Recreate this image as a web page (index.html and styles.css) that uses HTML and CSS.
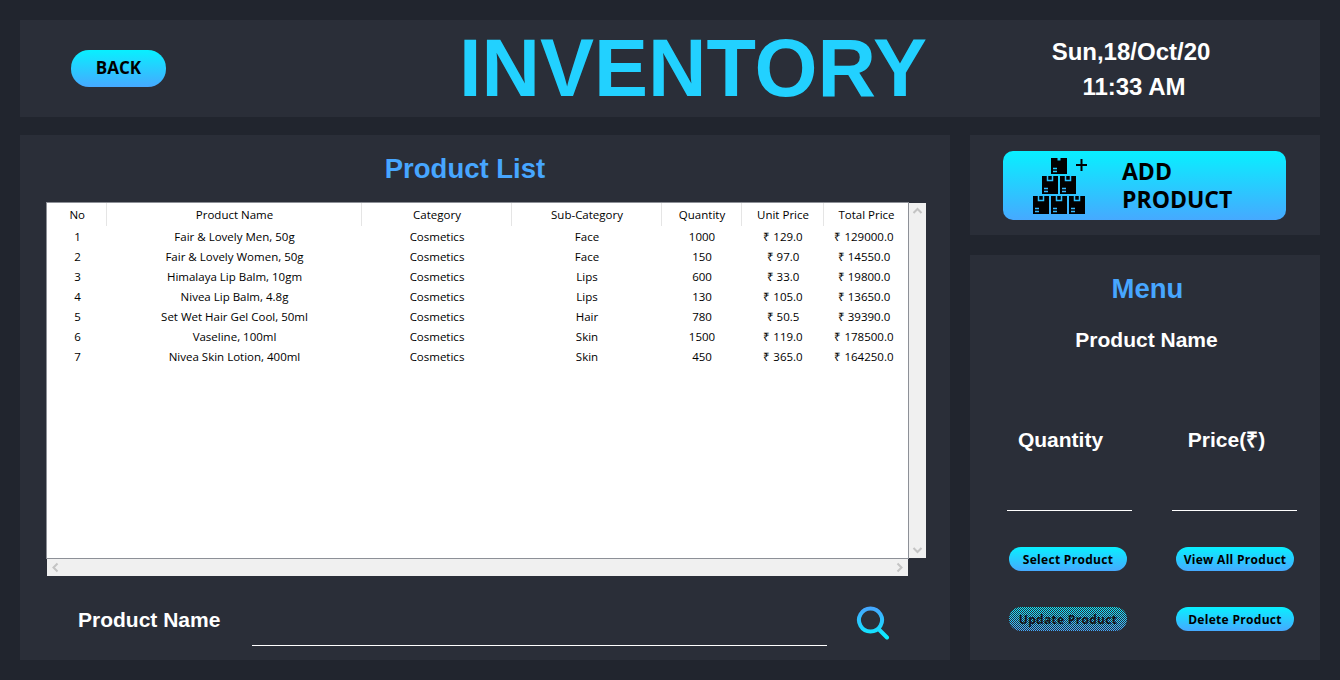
FILE: index.html
```html
<!DOCTYPE html>
<html lang="en">

<head>
    <meta charset="UTF-8">
    <meta name="viewport" content="width=device-width, initial-scale=1.0">
    <title>Inventory</title>
    <link rel="stylesheet" href="styles.css">
</head>

<body>
    <svg class="defs" width="0" height="0">
        <defs>
            <linearGradient id="searchGrad" x1="0" y1="0" x2="0" y2="1">
                <stop offset="0" stop-color="#44a8ff"/>
                <stop offset="1" stop-color="#0aeeff"/>
            </linearGradient>
            <g id="box">
                <rect width="16" height="18" fill="#000"/>
                <path d="M5.500 0v4.500h5V0" fill="none" stroke="#2cc0ff" stroke-width="1.500"/>
                <path d="M2 12.500h4M2 15.500h4" fill="none" stroke="#35b8ff" stroke-width="1.500"/>
            </g>
            <g id="boxTop">
                <rect width="16" height="16" fill="#000"/>
                <rect x="6.500" width="3" height="2.500" fill="#1cd8ff"/>
                <path d="M2 10.500h4M2 13.500h4" fill="none" stroke="#22ccff" stroke-width="1.500"/>
            </g>
        </defs>
    </svg>

    <header class="panel top-bar">
        <button class="btn-back">BACK</button>
        <h1 class="title">INVENTORY</h1>
        <div class="clock">
            <div>Sun,18/Oct/20</div>
            <div class="clock-time">11:33 AM</div>
        </div>
    </header>

    <div class="columns">
        <main class="panel list-panel">
            <h2 class="section-title list-title">Product List</h2>

            <div class="table-wrap">
                <div class="table-box">
                    <table class="products">
                        <colgroup>
                            <col class="c-no"><col class="c-name"><col class="c-cat"><col class="c-sub">
                            <col class="c-qty"><col class="c-unit"><col class="c-total">
                        </colgroup>
                        <thead>
                            <tr>
                                <th>No</th><th>Product Name</th><th>Category</th><th>Sub-Category</th>
                                <th>Quantity</th><th>Unit Price</th><th>Total Price</th>
                            </tr>
                        </thead>
                        <tbody>
                            <tr><td>1</td><td>Fair &amp; Lovely Men, 50g</td><td>Cosmetics</td><td>Face</td><td>1000</td><td>₹ 129.0</td><td>₹ 129000.0</td></tr>
                            <tr><td>2</td><td>Fair &amp; Lovely Women, 50g</td><td>Cosmetics</td><td>Face</td><td>150</td><td>₹ 97.0</td><td>₹ 14550.0</td></tr>
                            <tr><td>3</td><td>Himalaya Lip Balm, 10gm</td><td>Cosmetics</td><td>Lips</td><td>600</td><td>₹ 33.0</td><td>₹ 19800.0</td></tr>
                            <tr><td>4</td><td>Nivea Lip Balm, 4.8g</td><td>Cosmetics</td><td>Lips</td><td>130</td><td>₹ 105.0</td><td>₹ 13650.0</td></tr>
                            <tr><td>5</td><td>Set Wet Hair Gel Cool, 50ml</td><td>Cosmetics</td><td>Hair</td><td>780</td><td>₹ 50.5</td><td>₹ 39390.0</td></tr>
                            <tr><td>6</td><td>Vaseline, 100ml</td><td>Cosmetics</td><td>Skin</td><td>1500</td><td>₹ 119.0</td><td>₹ 178500.0</td></tr>
                            <tr><td>7</td><td>Nivea Skin Lotion, 400ml</td><td>Cosmetics</td><td>Skin</td><td>450</td><td>₹ 365.0</td><td>₹ 164250.0</td></tr>
                        </tbody>
                    </table>
                </div>
                <div class="scroll-v">
                    <svg width="17" height="17" viewBox="0 0 17 17"><path d="M4.500 10l4-4 4 4" class="chev"/></svg>
                    <svg width="17" height="17" viewBox="0 0 17 17"><path d="M4.500 7l4 4 4-4" class="chev"/></svg>
                </div>
                <div class="scroll-h">
                    <svg width="17" height="17" viewBox="0 0 17 17"><path d="M10.500 4.500l-4 4 4 4" class="chev"/></svg>
                    <svg width="17" height="17" viewBox="0 0 17 17"><path d="M6.500 4.500l4 4-4 4" class="chev"/></svg>
                </div>
            </div>

            <div class="search-row">
                <span class="field-label">Product Name</span>
                <div class="line search-line"></div>
                <svg class="search-icon" width="34" height="34" viewBox="0 0 34 34">
                    <path d="M14.500 2.500a11.500 11.500 0 1 0 .01 0zM23 23.500l8 8" fill="none" stroke="url(#searchGrad)" stroke-width="4" stroke-linecap="round"/>
                </svg>
            </div>
        </main>

        <aside class="side">
            <div class="panel add-panel">
                <button class="btn-add">
                    <svg class="boxes" width="56" height="56" viewBox="0 0 56 56">
                        <use href="#boxTop" x="18"/>
                        <use href="#box" x="9" y="18"/>
                        <use href="#box" x="27" y="18"/>
                        <use href="#box" y="38"/>
                        <use href="#box" x="18" y="38"/>
                        <use href="#box" x="36" y="38"/>
                        <path d="M43 7h11M48.500 1v12" stroke="#000" stroke-width="2" fill="none"/>
                    </svg>
                    <span class="add-text">ADD<br>PRODUCT</span>
                </button>
            </div>

            <div class="panel menu-panel">
                <h2 class="section-title menu-title">Menu</h2>
                <div class="field-label menu-name">Product Name</div>

                <div class="menu-grid">
                    <div class="field-label qty-label">Quantity</div>
                    <div class="field-label price-label">Price(₹)</div>
                    <div class="line"></div>
                    <div class="line"></div>
                    <button class="btn-small btn-left">Select Product</button>
                    <button class="btn-small btn-right">View All Product</button>
                    <button class="btn-small btn-left btn-disabled">Update Product</button>
                    <button class="btn-small btn-right">Delete Product</button>
                </div>
            </div>
        </aside>
    </div>
</body>

</html>
```

FILE: styles.css
```css
* {
    box-sizing: border-box;
}

body {
    margin: 0;
    padding: 20px;
    height: 680px;
    overflow: hidden;
    background-color: #21252e;
    font-family: "Liberation Sans", Arial, sans-serif;
    display: flex;
    flex-direction: column;
    gap: 18px;
}

.defs {
    position: absolute;
}

.panel {
    background-color: #2a2e38;
}

button {
    border: none;
    padding: 0;
    color: #000;
    font-family: "Open Sans", sans-serif;
    font-weight: 700;
    background: linear-gradient(#08f0ff, #46a9ff);
}

/* top bar */
.top-bar {
    height: 97px;
    flex-shrink: 0;
    display: flex;
    align-items: center;
    padding-left: 51px;
}

.btn-back {
    width: 95px;
    height: 37px;
    border-radius: 18px;
    font-size: 17px;
    line-height: 34px;
    padding-bottom: 2px;
}

.title {
    margin: 0 0 0 293px;
    width: 472px;
    font-size: 81px;
    line-height: 97px;
    font-weight: 700;
    color: #22d1ff;
    white-space: nowrap;
}

.clock {
    width: 190px;
    margin-left: 105px;
    text-align: center;
    color: #fff;
    font-size: 24px;
    font-weight: 700;
    line-height: 35px;
}

.clock-time {
    padding-left: 6px;
}

/* columns */
.columns {
    flex: 1;
    display: flex;
    gap: 20px;
    min-height: 0;
}

.list-panel {
    width: 930px;
    padding: 0 24px 0 26px;
}

.section-title {
    margin: 0;
    font-size: 27.500px;
    font-weight: 700;
    color: #47a6ff;
    text-align: center;
}

.list-title {
    padding-right: 42px;
    padding-top: 18px;
    line-height: 32px;
    height: 67px;
}

/* table */
.table-wrap {
    display: grid;
    grid-template-columns: 863px 17px;
    grid-template-rows: 357px 17px;
}

.table-box {
    background-color: #fff;
    border: 1px solid #8d9097;
    overflow: hidden;
}

.products {
    width: 861px;
    table-layout: fixed;
    border-collapse: collapse;
    font-family: "Open Sans", sans-serif;
    font-size: 11.500px;
    color: #000;
    margin-top: -1px;
}

.c-no { width: 59px; }
.c-name { width: 255px; }
.c-cat { width: 150px; }
.c-sub { width: 150px; }
.c-qty { width: 80px; }
.c-unit { width: 82px; }
.c-total { width: 85px; }

.products th {
    height: 24px;
    padding: 0 0 0 2px;
    font-weight: 400;
    border-right: 1px solid #e5e5e5;
}

.products td {
    height: 20px;
    padding: 0 0 0 2px;
    text-align: center;
    white-space: nowrap;
}

.products td:last-child {
    padding: 0 3px 0 0;
}

.scroll-v {
    background-color: #f0f0f0;
    margin: 1px 0;
    display: flex;
    flex-direction: column;
    justify-content: space-between;
}

.scroll-h {
    background-color: #f0f0f0;
    margin: 0 1px;
    display: flex;
    justify-content: space-between;
}

.chev {
    fill: none;
    stroke: #c4c4c4;
    stroke-width: 2;
}

/* search */
.search-row {
    display: flex;
    align-items: flex-start;
    margin-top: 31px;
    padding-left: 32px;
}

.field-label {
    font-size: 21px;
    font-weight: 700;
    line-height: 24px;
    color: #fff;
}

.search-row .field-label {
    padding-top: 1px;
}

.search-line {
    width: 575px;
    margin: 38px 0 0 32px;
}

.search-icon {
    margin-left: 29px;
    margin-top: -1px;
}

.line {
    height: 1px;
    background-color: #fff;
}

/* right column */
.side {
    width: 350px;
    display: flex;
    flex-direction: column;
    gap: 20px;
}

.add-panel {
    height: 100px;
    flex-shrink: 0;
    padding: 16px 34px 0 33px;
}

.btn-add {
    width: 283px;
    height: 69px;
    border-radius: 10px;
    display: flex;
    align-items: center;
    padding-left: 30px;
    text-align: left;
    font-size: 23px;
    font-weight: 700;
    line-height: 28px;
}

.boxes {
    margin-right: 33px;
}

.add-text {
    padding-bottom: 2px;
}

.menu-panel {
    flex: 1;
    min-height: 0;
}

.menu-title {
    padding-top: 18px;
    line-height: 32px;
    padding-left: 5px;
}

.menu-name {
    text-align: center;
    margin-top: 23px;
    padding-left: 3px;
}

.menu-grid {
    display: grid;
    grid-template-columns: 125px 125px;
    column-gap: 40px;
    margin: 76px 0 0 37px;
}

.qty-label {
    text-align: center;
    padding-right: 18px;
}

.price-label {
    text-align: center;
    padding-right: 16px;
}

.menu-grid .line {
    margin-top: 58px;
    margin-bottom: 36px;
}

.btn-small {
    height: 24px;
    border-radius: 12px;
    font-size: 12px;
    letter-spacing: 0.3px;
    margin-bottom: 36px;
    white-space: nowrap;
}

.btn-left {
    width: 118px;
    margin-left: 2px;
}

.btn-right {
    width: 118px;
    margin-left: 4px;
}

.btn-disabled {
    color: #14161c;
    background:
        conic-gradient(transparent 25%, #2a2e38 0 50%, transparent 0 75%, #2a2e38 0) 0 0 / 2px 2px,
        linear-gradient(#08f0ff, #46a9ff);
}
```
